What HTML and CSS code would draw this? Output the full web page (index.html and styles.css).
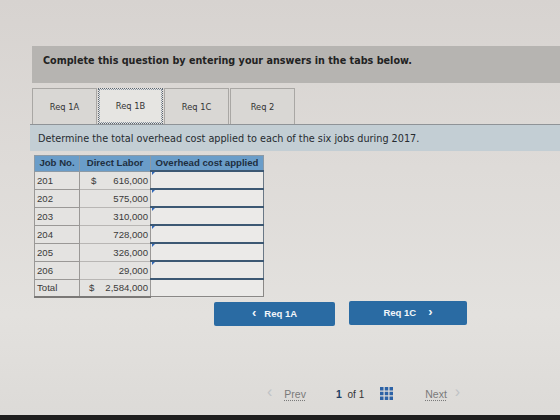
FILE: index.html
```html
<!DOCTYPE html>
<html>
<head>
<meta charset="utf-8">
<link rel="stylesheet" href="styles.css">
</head>
<body>
<div class="screen">
  <div class="banner">Complete this question by entering your answers in the tabs below.</div>

  <div class="tabs">
    <div class="tab">Req 1A</div>
    <div class="tab active">Req 1B</div>
    <div class="tab">Req 1C</div>
    <div class="tab">Req 2</div>
  </div>

  <div class="prompt">Determine the total overhead cost applied to each of the six jobs during 2017.</div>

  <table class="grid">
    <thead>
      <tr><th class="c-job">Job No.</th><th class="c-dl">Direct Labor</th><th class="c-oh">Overhead cost applied</th></tr>
    </thead>
    <tbody>
      <tr><td>201</td><td class="num"><span class="cur">$</span>616,000</td><td class="input"><span class="mark"></span></td></tr>
      <tr><td>202</td><td class="num">575,000</td><td class="input"><span class="mark"></span></td></tr>
      <tr><td>203</td><td class="num">310,000</td><td class="input"><span class="mark"></span></td></tr>
      <tr><td>204</td><td class="num">728,000</td><td class="input"><span class="mark"></span></td></tr>
      <tr><td>205</td><td class="num">326,000</td><td class="input"><span class="mark"></span></td></tr>
      <tr><td>206</td><td class="num">29,000</td><td class="input"><span class="mark"></span></td></tr>
      <tr class="total"><td>Total</td><td class="num"><span class="cur tight">$</span>2,584,000</td><td class="input plain"></td></tr>
    </tbody>
  </table>

  <div class="navbtns">
    <button class="btn prev"><span class="chev">&lsaquo;</span> Req 1A</button>
    <button class="btn next">Req 1C <span class="chev">&rsaquo;</span></button>
  </div>

  <div class="footer">
    <span class="arrow">&lsaquo;</span>
    <span class="link">Prev</span>
    <span class="page"><b>1</b> of 1</span>
    <svg class="gridicon" width="13" height="13" viewBox="0 0 13 13">
      <rect x="0" y="0" width="3.5" height="3.5"/><rect x="4.75" y="0" width="3.5" height="3.5"/><rect x="9.5" y="0" width="3.5" height="3.5"/>
      <rect x="0" y="4.75" width="3.5" height="3.5"/><rect x="4.75" y="4.75" width="3.5" height="3.5"/><rect x="9.5" y="4.75" width="3.5" height="3.5"/>
      <rect x="0" y="9.5" width="3.5" height="3.5"/><rect x="4.75" y="9.5" width="3.5" height="3.5"/><rect x="9.5" y="9.5" width="3.5" height="3.5"/>
    </svg>
    <span class="link next-link">Next</span>
    <span class="arrow">&rsaquo;</span>
  </div>
</div>
<div class="bezel"></div>
</body>
</html>
```

FILE: styles.css
```css
html, body {
  margin: 0;
  padding: 0;
}

body {
  width: 560px;
  height: 420px;
  overflow: hidden;
  background: linear-gradient(180deg, #d7d3d0 0%, #dedbd8 40%, #e3e1de 75%, #dcdad7 100%);
  font-family: "DejaVu Sans", Verdana, sans-serif;
  color: #2a2a2a;
  display: flex;
  flex-direction: column;
}

.screen {
  flex: 1;
  padding: 46px 0 0 30px;
  display: flex;
  flex-direction: column;
}

.banner {
  margin-left: 2px;
  height: 37px;
  box-sizing: border-box;
  background: #b6b4b1;
  padding: 9px 0 0 11px;
  font-weight: bold;
  font-size: 9.65px;
  color: #222;
}

.tabs {
  display: flex;
  margin: 5px 0 0 2px;
  height: 36px;
}

.tab {
  width: 63px;
  border: 1px solid #a9a7a4;
  border-bottom: none;
  background: #d9d7d4;
  display: flex;
  align-items: center;
  justify-content: center;
  font-size: 8.3px;
  color: #333;
  margin-right: 1px;
}

.tab.active {
  background: #e6e5e2;
  border: 1px dotted #5a6470;
  outline: 1px dotted #8a94a0;
  outline-offset: -2px;
}

.prompt {
  height: 26px;
  background: #c3ced4;
  border-top: 1px solid #8f9397;
  display: flex;
  align-items: center;
  padding-left: 8px;
  font-size: 9.7px;
  color: #262b30;
}

.grid {
  align-self: flex-start;
  margin: 4px 0 0 4px;
  border-collapse: collapse;
  table-layout: fixed;
  width: 226px;
  font-family: "Liberation Sans", Arial, sans-serif;
  font-size: 9.6px;
  color: #3a3a3a;
  background: #e4e3e1;
}

.grid th {
  background: #6a9dc9;
  color: #1e2e40;
  font-weight: bold;
  height: 14px;
  line-height: 14px;
  padding: 0;
  border: 1px solid #8c9aa6;
  text-align: center;
  white-space: nowrap;
}

.c-job { width: 44px; }
.c-dl { width: 70px; }
.c-oh { width: 112px; }

.grid td {
  height: 16px;
  padding: 0 2px;
  border: 1px solid #9a9896;
  white-space: nowrap;
}

.grid td.num {
  text-align: right;
  position: relative;
  border-bottom: 1px solid #b8b6b4;
}

.cur {
  float: left;
  margin-left: 9px;
}

.cur.tight {
  margin-left: 7px;
}

.grid td.input {
  position: relative;
  background: #ebeae8;
  border-top: 2px solid #3c5873;
  border-bottom: 1px solid #50677d;
  border-left: 1px solid #7a8a98;
  border-right: 1px solid #6a7886;
}

.grid td.input.plain {
  border: 1px solid #8a8886;
  border-top: 2px solid #3c5873;
}

.mark {
  position: absolute;
  left: 1px;
  top: 0;
  width: 0;
  height: 0;
  border-top: 3px solid #2e66b8;
  border-right: 3px solid transparent;
}

.grid tr.total td {
  border-bottom: 2px solid #7a7876;
}

.navbtns {
  display: flex;
  margin: 4px 0 0 184px;
  gap: 14px;
}

.btn {
  border: none;
  border-radius: 2px;
  background: #2a6ba3;
  color: #f2f6fa;
  font-family: "Liberation Sans", Arial, sans-serif;
  font-weight: bold;
  font-size: 9.5px;
  height: 24px;
  padding: 0;
  display: flex;
  align-items: center;
  justify-content: center;
  gap: 5px;
}

.btn.prev { width: 121px; }
.btn.next { width: 118px; margin-top: -1px; }

.chev {
  font-size: 13px;
  line-height: 1;
  margin-top: -2px;
}

.btn.prev .chev { margin-right: 3px; }
.btn.next .chev { margin-left: 7px; }

.footer {
  margin: 61px 0 0 237px;
  display: flex;
  align-items: center;
  font-family: "Liberation Sans", Arial, sans-serif;
  font-size: 10.5px;
  color: #6a6a6a;
  height: 14px;
}

.arrow {
  font-size: 16px;
  color: #c0c3c6;
  line-height: 1;
  margin-top: -3px;
}

.link {
  text-decoration: underline dotted;
  text-underline-offset: 2px;
  color: #7a7a7a;
  margin-left: 12px;
}

.page {
  margin-left: 30px;
  font-size: 10px;
  color: #333;
}

.page b {
  font-size: 10.5px;
  color: #1d3e63;
  margin-right: 3px;
}

.gridicon {
  margin-left: 16px;
  fill: #2c62a6;
}

.next-link {
  margin-left: 32px;
  margin-right: 8px;
}

.bezel {
  height: 5px;
  background: #1f1f1f;
}
```
